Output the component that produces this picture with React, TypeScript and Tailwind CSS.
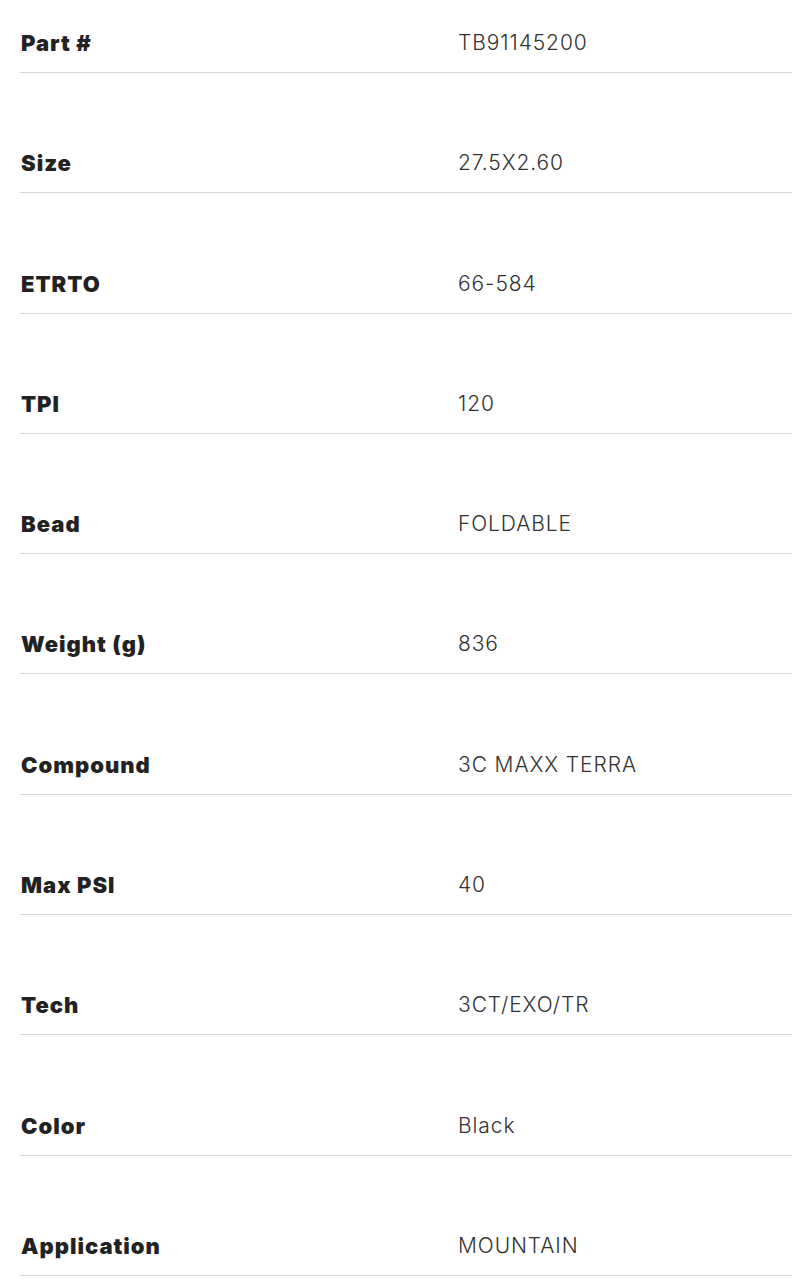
import React from 'react';

const specs: [string, string][] = [
    ['Part #', 'TB91145200'],
    ['Size', '27.5X2.60'],
    ['ETRTO', '66-584'],
    ['TPI', '120'],
    ['Bead', 'FOLDABLE'],
    ['Weight (g)', '836'],
    ['Compound', '3C MAXX TERRA'],
    ['Max PSI', '40'],
    ['Tech', '3CT/EXO/TR'],
    ['Color', 'Black'],
    ['Application', 'MOUNTAIN'],
];

const App = () => {
    return (
        <div className="bg-white min-h-[1280px] pl-[20px] font-['Inter',sans-serif]">
            {specs.map(([label, value], i) => (
                <div
                    key={label}
                    className={
                        'flex items-center border-b border-[#d6d6d6] pb-[17px] ' +
                        (i === 0 ? 'pt-[31px]' : 'pt-[78.3px]')
                    }
                >
                    <div className="w-[438px] pl-[1px] text-[22px] leading-[24px] tracking-[1px] font-black text-[#222]">
                        {label}
                    </div>
                    <div className="text-[21px] leading-[24px] tracking-[0.9px] font-light text-[#333]">{value}</div>
                </div>
            ))}
        </div>
    );
};

export default App;
